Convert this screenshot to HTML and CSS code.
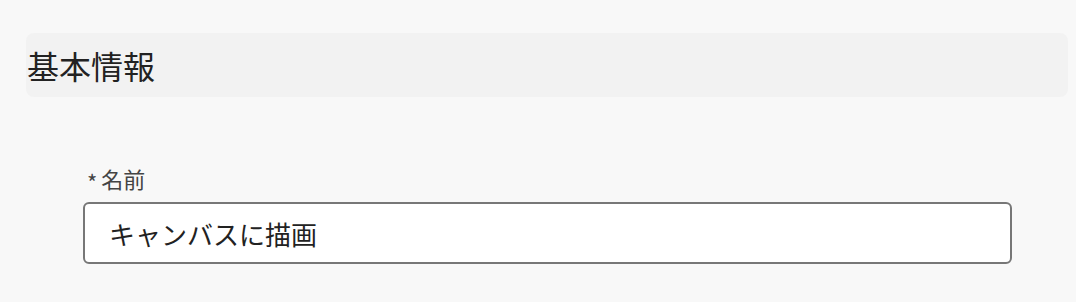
FILE: index.html
```html
<!DOCTYPE html>
<html lang="ja">
<head>
    <meta charset="UTF-8">
    <title>基本情報</title>
    <link rel="stylesheet" href="styles.css">
</head>
<body>
    <div class="section">
        <h2 class="section-title">基本情報</h2>
        <div class="form-group">
            <label for="name"><span class="required">*</span>名前</label>
            <input type="text" id="name" value="キャンバスに描画">
        </div>
    </div>
</body>
</html>
```

FILE: styles.css
```css
body { margin: 0; padding: 33px 8px 0 26px; background: #f8f8f8; font-family: "Noto Sans CJK JP", "Noto Sans", sans-serif; color: #222; }
.section-title { margin: 0; height: 64px; line-height: 64px; padding-left: 1px; background: #f2f2f2; border-radius: 8px; font-size: 32px; font-weight: normal; color: #222; }
.form-group { margin: 65px 0 0 57px; width: 929px; }
.form-group label { display: block; font-size: 22px; line-height: 32px; height: 32px; color: #444; margin-bottom: 8px; }
.required { display: inline-block; font-size: 22px; line-height: 22px; margin: 0 4px 0 4px; transform: translateY(3px); }
.form-group input { box-sizing: border-box; width: 100%; height: 62px; padding: 0 24px; background: #fff; border: 2px solid #777; border-radius: 6px; font-family: inherit; font-size: 26px; color: #222; outline: none; }
```
